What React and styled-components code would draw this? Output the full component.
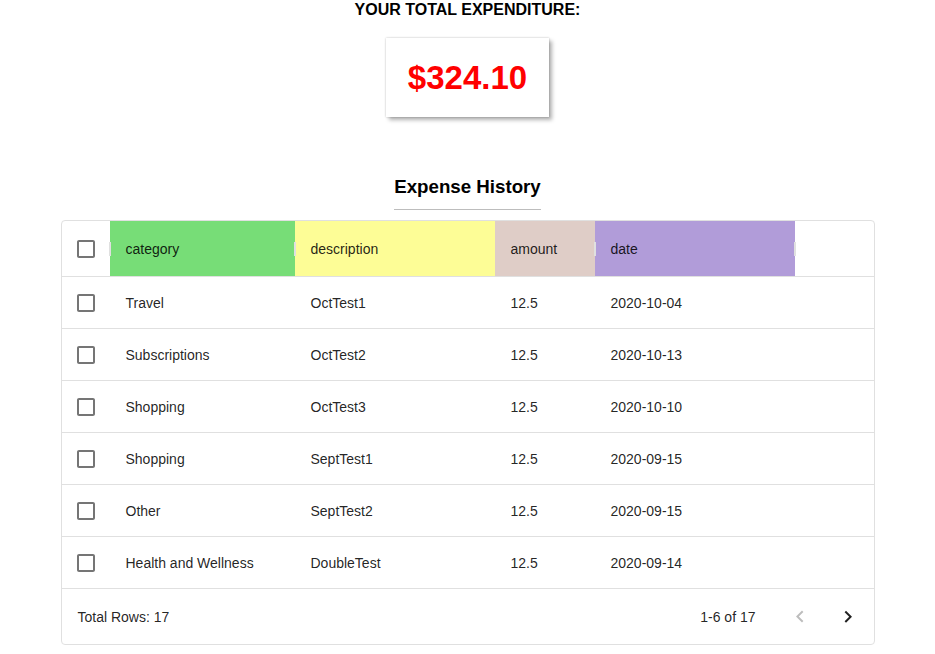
import React from 'react';
import styled, { createGlobalStyle } from 'styled-components';

const GlobalStyle = createGlobalStyle`
  body {
    margin: 0;
    background: #fff;
    font-family: 'Liberation Sans', Arial, sans-serif;
  }
`;

const Page = styled.div`
  display: flex;
  flex-direction: column;
  align-items: center;
  padding-top: 1px;
`;

const TotalTitle = styled.h4`
  margin: 0;
  font-size: 16px;
  font-weight: bold;
  color: #000;
  line-height: 18px;
`;

const TotalBox = styled.div`
  margin-top: 19px;
  width: 163px;
  height: 79px;
  display: flex;
  align-items: center;
  justify-content: center;
  background: #fff;
  box-shadow: 0 0 2px rgba(0, 0, 0, 0.25), 3px 3px 4px rgba(0, 0, 0, 0.3);
`;

const Amount = styled.span`
  color: #f00;
  font-size: 33px;
  font-weight: bold;
`;

const HistoryTitle = styled.h3`
  margin: 59px 0 0;
  font-size: 18.72px;
  font-weight: bold;
  line-height: 22px;
  padding-bottom: 11px;
  border-bottom: 1px solid #bdbdbd;
`;

const Grid = styled.div`
  margin-top: 10px;
  width: 812px;
  border: 1px solid #e0e0e0;
  border-radius: 4px;
  font-size: 14px;
  color: rgba(0, 0, 0, 0.87);
`;

const Row = styled.div`
  display: flex;
  height: ${(p) => (p.$header ? 55 : 51)}px;
  border-bottom: 1px solid #e0e0e0;
`;

const Cell = styled.div`
  position: relative;
  width: ${(p) => p.$w}px;
  flex-shrink: 0;
  display: flex;
  align-items: center;
  padding: 0 16px;
  box-sizing: border-box;
  background: ${(p) => p.$bg || 'transparent'};
`;

const CheckCell = styled.div`
  position: relative;
  width: 48px;
  flex-shrink: 0;
  display: flex;
  align-items: center;
  justify-content: center;
`;

const Separator = styled.span`
  position: absolute;
  right: -1px;
  top: 50%;
  width: 2px;
  height: 14px;
  margin-top: -7px;
  background: #e0e0e0;
  z-index: 1;
`;

const Footer = styled.div`
  height: 55px;
  display: flex;
  align-items: center;
  justify-content: space-between;
  padding: 0 2px 0 16px;
`;

const Pager = styled.div`
  display: flex;
  align-items: center;
`;

const PageLabel = styled.span`
  margin-right: 20px;
`;

const IconButton = styled.button`
  width: 48px;
  height: 48px;
  border: 0;
  padding: 12px;
  background: none;
  display: flex;
  align-items: center;
  justify-content: center;
  color: ${(p) => (p.disabled ? 'rgba(0,0,0,0.26)' : 'rgba(0,0,0,0.87)')};
  svg {
    width: 24px;
    height: 24px;
    fill: currentColor;
  }
`;

const BoxIcon = styled.svg`
  width: 24px;
  height: 24px;
  fill: rgba(0, 0, 0, 0.54);
`;

const Checkbox = () => (
  <BoxIcon viewBox="0 0 24 24">
    <path d="M19 5v14H5V5h14m0-2H5c-1.11 0-2 .9-2 2v14c0 1.1.89 2 2 2h14c1.1 0 2-.9 2-2V5c0-1.1-.9-2-2-2z" />
  </BoxIcon>
);

const columns = [
  { key: 'category', w: 185, bg: '#77dd77' },
  { key: 'description', w: 200, bg: '#fdfd96' },
  { key: 'amount', w: 100, bg: '#dfcdc7' },
  { key: 'date', w: 200, bg: '#b19cd9' },
];

const rows = [
  ['Travel', 'OctTest1', '12.5', '2020-10-04'],
  ['Subscriptions', 'OctTest2', '12.5', '2020-10-13'],
  ['Shopping', 'OctTest3', '12.5', '2020-10-10'],
  ['Shopping', 'SeptTest1', '12.5', '2020-09-15'],
  ['Other', 'SeptTest2', '12.5', '2020-09-15'],
  ['Health and Wellness', 'DoubleTest', '12.5', '2020-09-14'],
];

export default function App() {
  return (
    <Page>
      <GlobalStyle />
      <TotalTitle>YOUR TOTAL EXPENDITURE:</TotalTitle>
      <TotalBox>
        <Amount>$324.10</Amount>
      </TotalBox>
      <HistoryTitle>Expense History</HistoryTitle>
      <Grid>
        <Row $header>
          <CheckCell>
            <Checkbox />
            <Separator />
          </CheckCell>
          {columns.map((c) => (
            <Cell key={c.key} $w={c.w} $bg={c.bg}>
              {c.key}
              {c.key !== 'description' && <Separator />}
            </Cell>
          ))}
        </Row>
        {rows.map((r, i) => (
          <Row key={i}>
            <CheckCell>
              <Checkbox />
            </CheckCell>
            {r.map((v, j) => (
              <Cell key={j} $w={columns[j].w}>
                {v}
              </Cell>
            ))}
          </Row>
        ))}
        <Footer>
          <span>Total Rows: 17</span>
          <Pager>
            <PageLabel>1-6 of 17</PageLabel>
            <IconButton disabled aria-label="previous page">
              <svg viewBox="0 0 24 24">
                <path d="M15.41 16.09l-4.58-4.59 4.58-4.59L14 5.5l-6 6 6 6z" />
              </svg>
            </IconButton>
            <IconButton aria-label="next page">
              <svg viewBox="0 0 24 24">
                <path d="M8.59 16.34l4.58-4.59-4.58-4.59L10 5.75l6 6-6 6z" />
              </svg>
            </IconButton>
          </Pager>
        </Footer>
      </Grid>
    </Page>
  );
}
